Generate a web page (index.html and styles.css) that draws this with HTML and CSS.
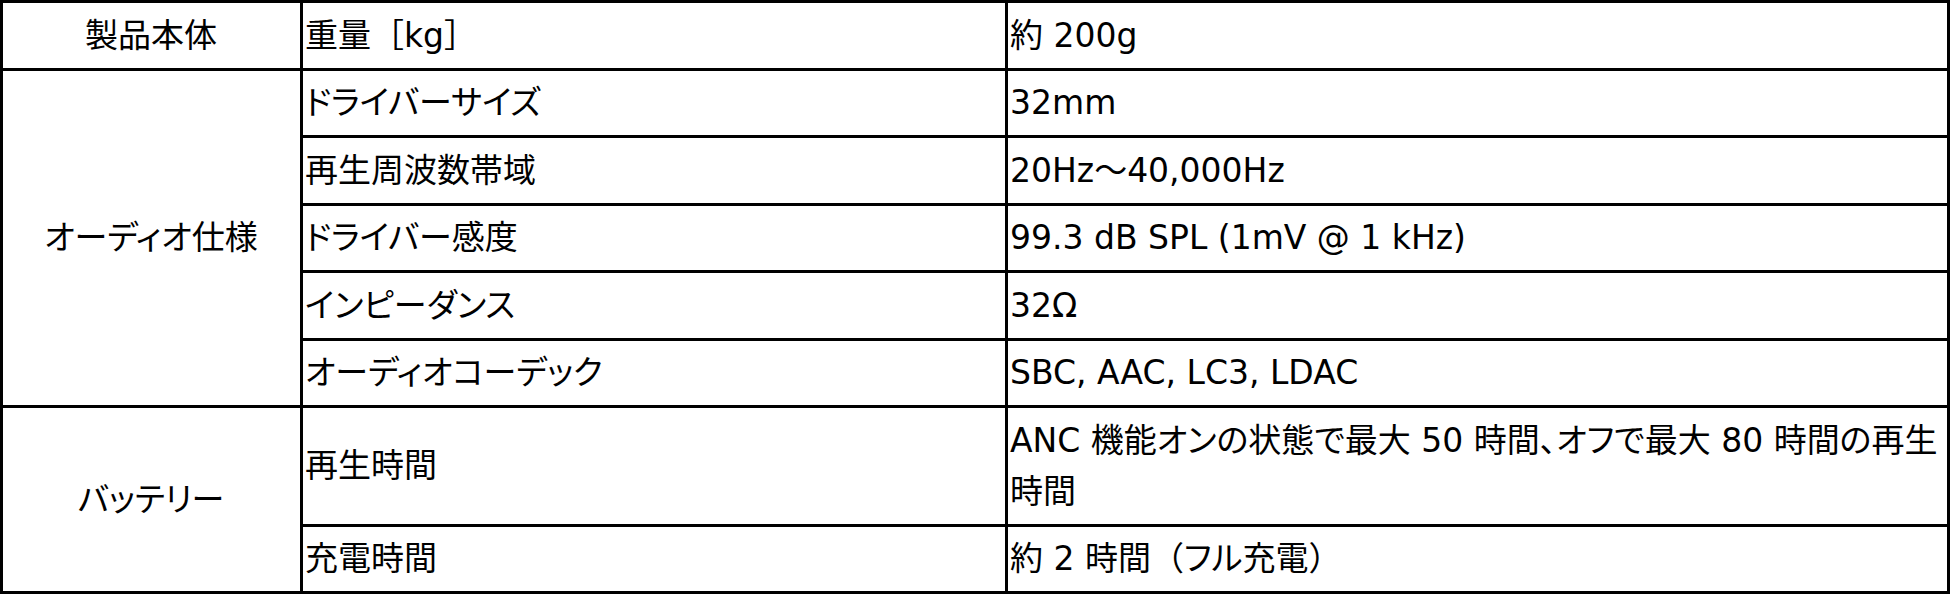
FILE: index.html
```html
<!DOCTYPE html>
<html lang="ja">
<head>
<meta charset="utf-8">
<title>仕様</title>
<link rel="stylesheet" href="styles.css">
</head>
<body>
<table class="spec">
  <colgroup>
    <col class="c-cat">
    <col class="c-item">
    <col class="c-val">
  </colgroup>
  <tbody>
    <tr>
      <th class="cat">製品本体</th>
      <td class="item">重量<span class="fw">［</span>kg<span class="fw">］</span></td>
      <td class="val">約 200g</td>
    </tr>
    <tr>
      <th class="cat" rowspan="5">オーディオ仕様</th>
      <td class="item">ドライバーサイズ</td>
      <td class="val">32mm</td>
    </tr>
    <tr>
      <td class="item">再生周波数帯域</td>
      <td class="val">20Hz～40,000Hz</td>
    </tr>
    <tr>
      <td class="item">ドライバー感度</td>
      <td class="val">99.3 dB SPL (1mV @ 1 kHz)</td>
    </tr>
    <tr>
      <td class="item">インピーダンス</td>
      <td class="val">32Ω</td>
    </tr>
    <tr>
      <td class="item">オーディオコーデック</td>
      <td class="val">SBC, AAC, LC3, LDAC</td>
    </tr>
    <tr>
      <th class="cat" rowspan="2">バッテリー</th>
      <td class="item">再生時間</td>
      <td class="val">ANC 機能オンの状態で最大 50 時間、オフで最大 80 時間の再生時間</td>
    </tr>
    <tr>
      <td class="item">充電時間</td>
      <td class="val">約 2 時間<span class="fw">（</span>フル充電<span class="fw">）</span></td>
    </tr>
  </tbody>
</table>
</body>
</html>
```
FILE: styles.css
```css
html, body {
  margin: 0;
  padding: 0;
  background: #ffffff;
}

.spec {
  width: 1950px;
  border-collapse: collapse;
  table-layout: fixed;
  font-family: "DejaVu Sans", "Noto Sans CJK JP", sans-serif;
  font-feature-settings: "palt";
  font-size: 33px;
  line-height: 51px;
  color: #000000;
}

.c-cat { width: 300px; }
.c-item { width: 705px; }

.spec th,
.spec td {
  border: 3px solid #000000;
  padding: 6.75px 3px 6.75px 2px;
  vertical-align: middle;
  font-weight: normal;
  text-align: left;
}

.spec .cat {
  text-align: center;
}

.fw {
  font-feature-settings: normal;
}
```
